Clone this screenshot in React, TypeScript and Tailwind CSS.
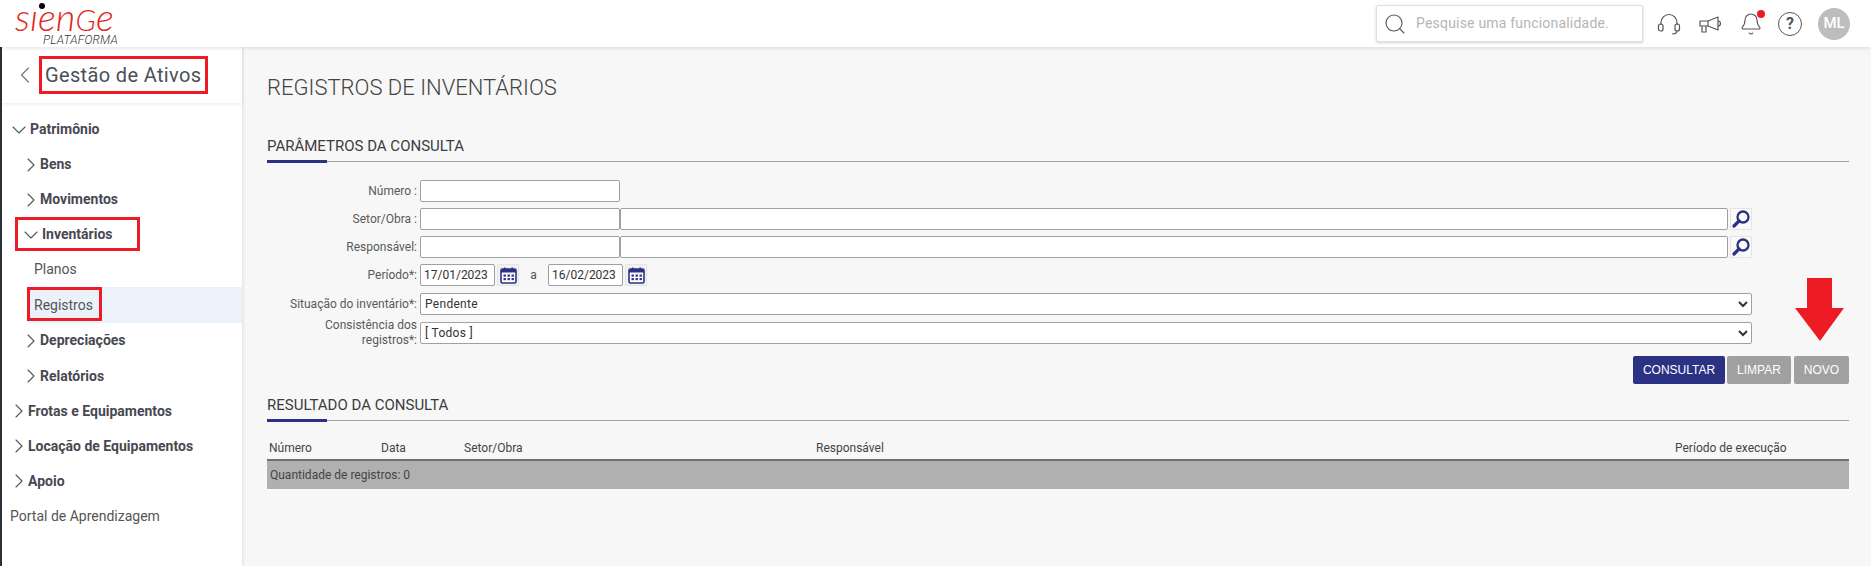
import { Bell, ChevronDown, ChevronLeft, ChevronRight, Search } from "lucide-react";

const labelClass = "w-[153px] shrink-0 pr-[3px] text-right text-[12px] leading-[15px] text-[#5a5a5a]";
const inputClass = "h-[22px] rounded-[2px] border border-[#a0a0a0] bg-white px-[3px] text-[12px] text-[#333] outline-none";

function CalendarIcon() {
  return (
    <span className="flex h-[22px] w-[22px] items-center justify-center border border-[#e4e4e4] bg-[#f2f2f2]">
      <svg width="17" height="17" viewBox="0 0 17 17" aria-hidden="true">
        <rect x="1" y="2" width="15" height="14" rx="1.5" fill="#fff" stroke="#2b3183" strokeWidth="1.6" />
        <rect x="1" y="2" width="15" height="3.5" fill="#2b3183" />
        <rect x="4" y="0.5" width="1.6" height="3" fill="#2b3183" />
        <rect x="11.4" y="0.5" width="1.6" height="3" fill="#2b3183" />
        {[3.5, 7.5, 11.5].map((x) =>
          [7.5, 11].map((y) => <rect key={`${x}-${y}`} x={x} y={y} width="2.4" height="2.2" fill="#2b3183" />)
        )}
      </svg>
    </span>
  );
}

function SearchButton() {
  return (
    <span className="ml-[2px] flex h-[22px] w-[22px] items-center justify-center border border-[#e4e4e4] bg-[#fafafa]">
      <svg width="18" height="18" viewBox="0 0 18 18" fill="none" stroke="#2b3183" aria-hidden="true">
        <circle cx="11" cy="7" r="5.5" strokeWidth="2.3" />
        <path d="M7 11 L2 16" strokeWidth="3.2" strokeLinecap="round" />
      </svg>
    </span>
  );
}

function HeadsetIcon() {
  return (
    <svg width="24" height="24" viewBox="0 0 24 24" fill="none" stroke="#555" strokeWidth="1.2" aria-hidden="true">
      <path d="M4 13 V10.5 a8 8 0 0 1 16 0 V13" />
      <rect x="1.5" y="12" width="4.5" height="7" rx="2" />
      <rect x="18" y="12" width="4.5" height="7" rx="2" />
      <path d="M20 19 c0 2 -2 3 -5 3" />
    </svg>
  );
}

function MegaphoneIcon() {
  return (
    <svg width="24" height="24" viewBox="0 0 24 24" fill="none" stroke="#555" strokeWidth="1.2" strokeLinejoin="round" aria-hidden="true">
      <path d="M2 9 H10 L20 5 V18 L10 14 H2 Z" />
      <path d="M10 9 V14" />
      <path d="M20 9 a2.5 2.5 0 0 1 0 5" />
      <path d="M4 14 V20 H8 V14" />
    </svg>
  );
}

function SectionTitle({ children }: { children: string }) {
  return (
    <div className="relative border-b border-[#a0a0a0] pb-[6px] text-[15px] leading-[17px] text-[#3c3c3c]">
      {children}
      <div className="absolute -bottom-[2px] left-0 h-[3px] w-[60px] bg-[#2b3183]" />
    </div>
  );
}

function NavGroup({ label, open, indent, boxed }: { label: string; open?: boolean; indent: string; boxed?: boolean }) {
  const Icon = open ? ChevronDown : ChevronRight;
  return (
    <div className={`relative flex h-[35.1px] items-center text-[14px] font-bold text-[#484852] ${indent}`}>
      <span className="flex w-[18px] shrink-0 justify-center">
        <Icon className="h-[24px] w-[24px] shrink-0 text-[#555]" strokeWidth={1.1} />
      </span>
      <span className={open ? "ml-[2px]" : ""}>{label}</span>
      {boxed && <div className="absolute left-[13px] top-0 h-[34px] w-[125px] border-[3px] border-[#ed1c24]" />}
    </div>
  );
}

function Row({ label, children, className = "" }: { label: string; children: React.ReactNode; className?: string }) {
  return (
    <div className={`flex h-[22px] items-center ${className}`}>
      <label className={labelClass}>{label}</label>
      {children}
    </div>
  );
}

export default function App() {
  return (
    <div className="flex h-[566px] w-full flex-col overflow-hidden bg-[#f7f7f7] font-['Roboto',sans-serif]">
      {/* Cabeçalho */}
      <header className="z-20 flex h-[47px] shrink-0 items-center justify-between bg-white pl-[15px] pr-[21px] shadow-[0_1px_4px_rgba(0,0,0,0.12)]">
        <div className="relative flex h-[47px] w-[104px] flex-col">
          <span className="h-[33px] whitespace-nowrap font-['Lato',sans-serif] text-[38px] font-light italic leading-[33px] text-[#e3261b]">
            sıen<span className="text-[30px]">G</span>e
          </span>
          <span className="absolute left-[24px] top-[3px] h-[6px] w-[6px] rounded-full bg-black" />
          <span className="ml-[28px] mt-[1px] whitespace-nowrap font-['Roboto',sans-serif] text-[12px] font-light italic leading-[13px] tracking-[0.2px] text-[#333]">PLATAFORMA</span>
        </div>
        <div className="flex items-center">
          <div className="flex h-[37px] w-[267px] items-center rounded-[2px] border border-[#e0e0e0] bg-white pl-[6px] shadow-[0_1px_3px_rgba(0,0,0,0.18)]">
            <Search className="h-[24px] w-[24px] text-[#555]" strokeWidth={1.1} />
            <span className="ml-[9px] text-[14px] tracking-[0.2px] text-[#b5b5b5]">Pesquise uma funcionalidade.</span>
          </div>
          <span className="ml-[14px]"><HeadsetIcon /></span>
          <span className="ml-[17px]"><MegaphoneIcon /></span>
          <div className="relative ml-[17px]">
            <Bell className="h-[24px] w-[24px] text-[#555]" strokeWidth={1.1} />
            <span className="absolute -right-[2px] -top-[2px] h-[8px] w-[8px] rounded-full bg-[#ed1c24]" />
          </div>
          <div className="ml-[15px] flex h-[24px] w-[24px] items-center justify-center rounded-full border-[1.5px] border-[#555] text-[16px] font-bold text-[#555]">?</div>
          <div className="ml-[16px] flex h-[32px] w-[32px] items-center justify-center rounded-full bg-[#bdbdbd] text-[15px] font-medium text-white">ML</div>
        </div>
      </header>

      <div className="flex min-h-0 flex-1">
        {/* Navegação */}
        <aside className="w-[242px] shrink-0 border-l-2 border-[#2b2f38] bg-white shadow-[1px_0_3px_rgba(0,0,0,0.1)]">
          <div className="flex h-[56px] items-center pl-[9px] shadow-[0_2px_3px_rgba(0,0,0,0.06)]">
            <ChevronLeft className="h-[28px] w-[28px] text-[#777]" strokeWidth={1} />
            <div className="flex h-[38px] w-[169px] items-center border-[3px] border-[#ed1c24] pl-[3px] text-[20px] tracking-[0.35px] text-[#4a4f58]">
              Gestão de Ativos
            </div>
          </div>
          <nav className="pt-[9px]">
            <NavGroup label="Patrimônio" open indent="pl-[8px]" />
            <NavGroup label="Bens" indent="pl-[20px]" />
            <NavGroup label="Movimentos" indent="pl-[20px]" />
            <NavGroup label="Inventários" open indent="pl-[20px]" boxed />
            <div className="flex h-[35px] items-center pl-[32px] text-[14px] text-[#555]">Planos</div>
            <div className="relative ml-[25px] flex h-[36px] items-center bg-[#ecf2f9] pl-[7px] text-[14px] text-[#555]">
              Registros
              <div className="absolute left-0 top-0 h-[34px] w-[75px] border-[3px] border-[#ed1c24]" />
            </div>
            <NavGroup label="Depreciações" indent="pl-[20px]" />
            <NavGroup label="Relatórios" indent="pl-[20px]" />
            <NavGroup label="Frotas e Equipamentos" indent="pl-[8px]" />
            <NavGroup label="Locação de Equipamentos" indent="pl-[8px]" />
            <NavGroup label="Apoio" indent="pl-[8px]" />
            <div className="flex h-[35px] items-center pl-[8px] text-[14px] text-[#555]">Portal de Aprendizagem</div>
          </nav>
        </aside>

        {/* Conteúdo */}
        <main className="relative min-w-0 flex-1 pl-[25px] pr-[22px] pt-[29px]">
          <h1 className="text-[22px] font-light leading-[24px] text-[#444]">REGISTROS DE INVENTÁRIOS</h1>

          <div className="mt-[38px]">
            <SectionTitle>PARÂMETROS DA CONSULTA</SectionTitle>
          </div>

          <form className="mr-[97px] mt-[18px] flex flex-col">
            <Row label="Número :">
              <input className={`${inputClass} w-[200px]`} />
            </Row>
            <Row label="Setor/Obra :" className="mt-[6px]">
              <input className={`${inputClass} w-[200px]`} />
              <input className={`${inputClass} min-w-0 flex-1`} />
              <SearchButton />
            </Row>
            <Row label="Responsável:" className="mt-[6px]">
              <input className={`${inputClass} w-[200px]`} />
              <input className={`${inputClass} min-w-0 flex-1`} />
              <SearchButton />
            </Row>
            <Row label="Período*:" className="mt-[6px]">
              <input className={`${inputClass} w-[75px]`} defaultValue="17/01/2023" />
              <span className="ml-[2px]"><CalendarIcon /></span>
              <span className="w-[29px] text-center text-[12px] text-[#555]">a</span>
              <input className={`${inputClass} w-[75px]`} defaultValue="16/02/2023" />
              <span className="ml-[2px]"><CalendarIcon /></span>
            </Row>
            <Row label="Situação do inventário*:" className="mt-[7px]">
              <select className={`${inputClass} !px-0 min-w-0 flex-1 tracking-[0.3px]`} defaultValue="Pendente">
                <option>Pendente</option>
              </select>
            </Row>
            <Row label="Consistência dos registros*:" className="mt-[7px]">
              <select className={`${inputClass} !px-0 min-w-0 flex-1 tracking-[0.3px]`} defaultValue="[ Todos ]">
                <option>[ Todos ]</option>
              </select>
            </Row>
          </form>

          <div className="mt-[12px] flex justify-end gap-[2px] font-['Liberation_Sans',sans-serif] text-[12px] text-white">
            <button className="h-[28px] w-[92px] rounded-[2px] bg-[#2b3183]">CONSULTAR</button>
            <button className="h-[28px] w-[64px] rounded-[2px] bg-[#a0a0a0]">LIMPAR</button>
            <button className="ml-[1px] h-[28px] w-[55px] rounded-[2px] bg-[#a0a0a0]">NOVO</button>
          </div>

          <div className="mt-[13px]">
            <SectionTitle>RESULTADO DA CONSULTA</SectionTitle>
          </div>

          <div className="mt-[17px] flex h-[20px] items-center px-[2px] text-[12px] text-[#444]">
            <span className="w-[112px]">Número</span>
            <span className="w-[83px]">Data</span>
            <span className="w-[352px]">Setor/Obra</span>
            <span className="w-[859px]">Responsável</span>
            <span>Período de execução</span>
          </div>
          <div className="mt-[1px] flex h-[30px] items-center border-t-2 border-[#707070] bg-[#b0b0b0] px-[3px] text-[12px] text-[#444]">
            Quantidade de registros: 0
          </div>

          {/* Seta vermelha */}
          <svg className="absolute right-[26px] top-[231px]" width="50" height="63" viewBox="0 0 50 63" aria-hidden="true">
            <polygon points="12,0 37,0 37,30 49,30 25,63 0,30 12,30" fill="#ed1c24" />
          </svg>
        </main>
      </div>
    </div>
  );
}
